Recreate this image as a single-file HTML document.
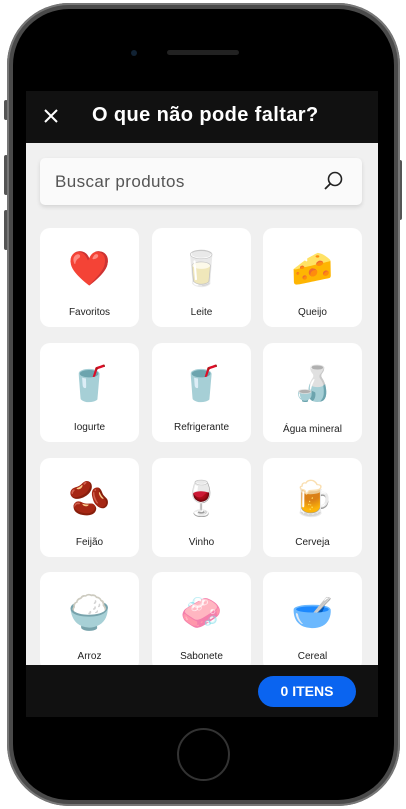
<!DOCTYPE html>
<html><head><style>
*{margin:0;padding:0;box-sizing:border-box}
body{width:406px;height:809px;background:#fff;position:relative;overflow:hidden;font-family:"Liberation Sans",sans-serif}
.frame{position:absolute;left:7px;top:3px;width:393px;height:803px;border-radius:62px;background:#4a4a4a;box-shadow:inset 0 0 0 2px #777}
.inner{position:absolute;left:13px;top:9px;width:381px;height:791px;border-radius:56px;background:#000}
.btn{position:absolute;background:#555;width:4px;border-radius:2px}
.screen{position:absolute;left:26px;top:91px;width:352px;height:626px;background:#f0f0f0;overflow:hidden}
.hdr{position:absolute;left:0;top:0;width:352px;height:52px;background:#111}
.hdr .t{position:absolute;left:66px;top:13px;color:#fff;font-weight:bold;font-size:20px;letter-spacing:.4px}
.x{position:absolute;left:17px;top:17px}
.search{position:absolute;left:14px;top:67px;width:322px;height:47px;background:#fafafa;border-radius:5px;box-shadow:0 2px 4px rgba(0,0,0,.12)}
.search span{position:absolute;left:15px;top:14px;font-size:17px;color:#555;letter-spacing:.4px}
.card{position:absolute;width:99px;height:99px;background:#fff;border-radius:10px}
.card .e{position:absolute;top:21px;width:100%;text-align:center;font-size:34px;line-height:40px}
.card .l{position:absolute;top:79px;width:100%;text-align:center;font-size:10px;color:#222}
.bot{position:absolute;left:0;top:574px;width:352px;height:52px;background:#111}
.pill{position:absolute;left:232px;top:11px;width:98px;height:31px;border-radius:16px;background:#0a64f0;color:#fff;font-weight:bold;font-size:14px;text-align:center;line-height:31px}
.home{position:absolute;left:177px;top:728px;width:53px;height:53px;border-radius:50%;border:2px solid #333}
.cam{position:absolute;left:131px;top:50px;width:6px;height:6px;border-radius:50%;background:#123}
.spk{position:absolute;left:167px;top:50px;width:72px;height:5px;border-radius:3px;background:#222}
</style></head><body>
<div class="btn" style="left:4px;top:100px;height:20px"></div>
<div class="btn" style="left:4px;top:155px;height:40px"></div>
<div class="btn" style="left:4px;top:210px;height:40px"></div>
<div class="btn" style="left:398px;top:160px;height:60px"></div>
<div class="frame"></div>
<div class="inner"></div>
<div class="cam"></div><div class="spk"></div>
<div class="screen">
<div class="hdr">
<svg class="x" width="16" height="16" viewBox="0 0 16 16"><path d="M2 2L14 14M14 2L2 14" stroke="#fff" stroke-width="2"/></svg>
<div class="t">O que não pode faltar?</div></div>
<div class="search"><span>Buscar produtos</span>
<svg style="position:absolute;left:282px;top:12px" width="22" height="22" viewBox="0 0 22 22"><circle cx="13" cy="9" r="6.5" fill="none" stroke="#222" stroke-width="1.6"/><path d="M8.5 13.5L3 19" stroke="#222" stroke-width="1.8"/></svg></div>
<div class="card" style="left:14px;top:137px"><div class="e">❤️</div><div class="l">Favoritos</div></div>
<div class="card" style="left:126px;top:137px"><div class="e">🥛</div><div class="l">Leite</div></div>
<div class="card" style="left:237px;top:137px"><div class="e">🧀</div><div class="l">Queijo</div></div>
<div class="card" style="left:14px;top:252px"><div class="e">🥤</div><div class="l">Iogurte</div></div>
<div class="card" style="left:126px;top:252px"><div class="e">🥤</div><div class="l">Refrigerante</div></div>
<div class="card" style="left:237px;top:252px"><div class="e">🍶</div><div class="l" style="top:81px">Água mineral</div></div>
<div class="card" style="left:14px;top:367px"><div class="e">🫘</div><div class="l">Feijão</div></div>
<div class="card" style="left:126px;top:367px"><div class="e">🍷</div><div class="l">Vinho</div></div>
<div class="card" style="left:237px;top:367px"><div class="e">🍺</div><div class="l">Cerveja</div></div>
<div class="card" style="left:14px;top:481px"><div class="e">🍚</div><div class="l">Arroz</div></div>
<div class="card" style="left:126px;top:481px"><div class="e">🧼</div><div class="l">Sabonete</div></div>
<div class="card" style="left:237px;top:481px"><div class="e">🥣</div><div class="l">Cereal</div></div>
<div class="bot"><div class="pill">0 ITENS</div></div>
</div>
<div class="home"></div>
</body></html>
